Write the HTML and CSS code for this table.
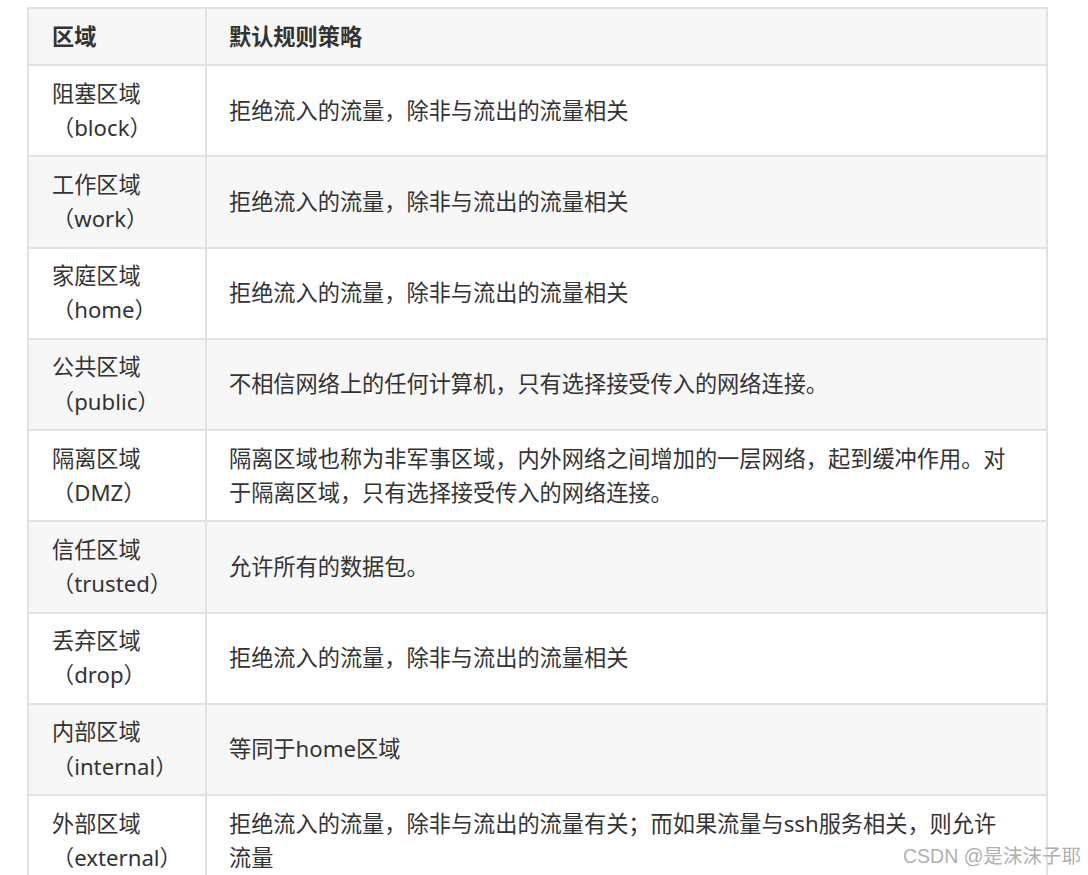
FILE: index.html
```html
<!DOCTYPE html>
<html lang="zh-CN">
<head>
<meta charset="utf-8">
<title>防火墙区域</title>
<link rel="stylesheet" href="styles.css">
</head>
<body>
<table class="zones">
  <colgroup>
    <col class="col-zone">
    <col class="col-rule">
  </colgroup>
  <thead>
    <tr><th>区域</th><th>默认规则策略</th></tr>
  </thead>
  <tbody>
    <tr><td>阻塞区域（block）</td><td>拒绝流入的流量，除非与流出的流量相关</td></tr>
    <tr><td>工作区域（work）</td><td>拒绝流入的流量，除非与流出的流量相关</td></tr>
    <tr><td>家庭区域（home）</td><td>拒绝流入的流量，除非与流出的流量相关</td></tr>
    <tr><td>公共区域（public）</td><td>不相信网络上的任何计算机，只有选择接受传入的网络连接。</td></tr>
    <tr><td>隔离区域（DMZ）</td><td>隔离区域也称为非军事区域，内外网络之间增加的一层网络，起到缓冲作用。对于隔离区域，只有选择接受传入的网络连接。</td></tr>
    <tr><td>信任区域（trusted）</td><td>允许所有的数据包。</td></tr>
    <tr><td>丢弃区域（drop）</td><td>拒绝流入的流量，除非与流出的流量相关</td></tr>
    <tr><td>内部区域（internal）</td><td>等同于home区域</td></tr>
    <tr><td>外部区域（external）</td><td>拒绝流入的流量，除非与流出的流量有关；而如果流量与ssh服务相关，则允许流量</td></tr>
  </tbody>
</table>
<div class="watermark">CSDN @是沫沫子耶</div>
</body>
</html>
```

FILE: styles.css
```css
html {
  overflow: hidden;
}

body {
  margin: 0;
  background: #ffffff;
  font-family: "Noto Sans", "Noto Sans CJK SC", sans-serif;
  color: #333333;
}

.zones {
  border-collapse: collapse;
  margin: 7px 0 0 27px;
  width: 1021px;
  table-layout: fixed;
  font-size: 22.2px;
  line-height: 34.125px;
}

.col-zone {
  width: 178px;
}

.zones th,
.zones td {
  border: 2px solid #dfe2e6;
  padding: 10.5px 21px 10.5px 23px;
  text-align: left;
  vertical-align: middle;
}

.zones td + td,
.zones th + th {
  padding-left: 22px;
  padding-right: 30px;
}

.zones th {
  font-weight: 700;
  background: #f7f7f7;
}

.zones tbody tr:nth-child(even) td {
  background: #f7f7f7;
}

.watermark {
  position: absolute;
  left: 903px;
  top: 843px;
  font-family: "Liberation Sans", "Noto Sans CJK SC", sans-serif;
  font-size: 19.5px;
  line-height: 26px;
  color: #b0b0b0;
  white-space: nowrap;
}
```
